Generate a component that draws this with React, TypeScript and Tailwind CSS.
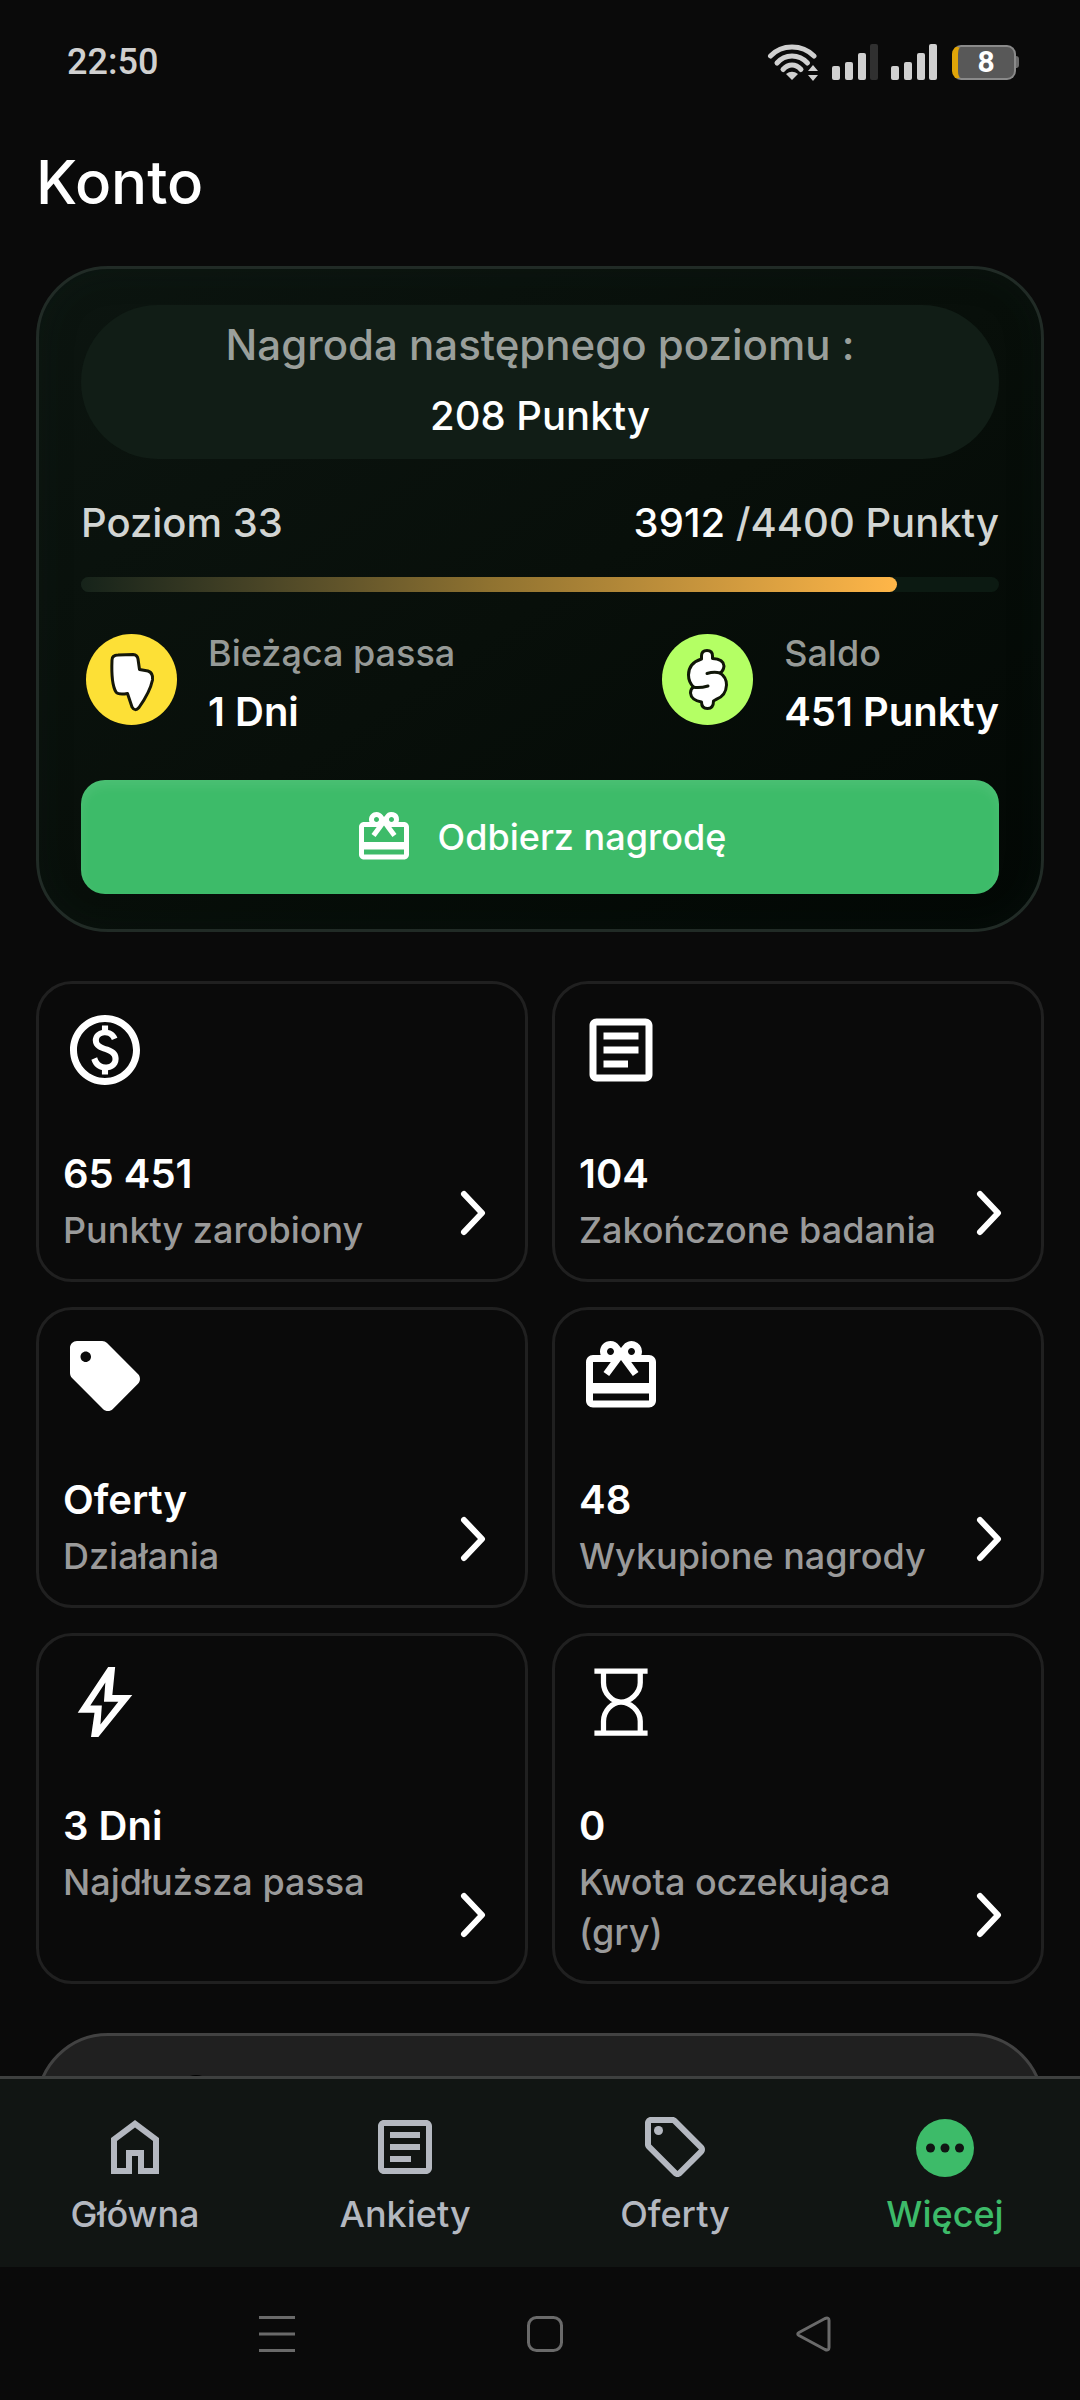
import type { ReactNode } from "react";
import { MdOutlineArticle, MdOutlinePaid, MdOutlineSell, MdRedeem, MdSell } from "react-icons/md";

function StatusBar() {
  return (
    <header className="flex h-[124px] shrink-0 items-center justify-between pr-[61px] pl-[67px] font-[Roboto,sans-serif] text-[#d0d0d0]">
      <time className="text-[36px] leading-[40px] font-medium">22:50</time>
      <div className="flex items-center gap-[13px]">
        <svg width="52" height="38" viewBox="0 0 52 38" fill="none" stroke="currentColor" strokeWidth="5" strokeLinecap="round" aria-label="Wi-Fi">
          <path d="M3.500 13Q12 4 25 4T47 13" />
          <path d="M10 20Q16 13 25 13T40.500 20" />
          <path d="M16 26.500Q20 22 25 22T34 26.500" />
          <path d="M25 37L19 31Q25 26.500 31 31Z" fill="currentColor" stroke="none" />
          <path d="M41 28L46 22L51 28ZM41 32L46 38L51 32Z" fill="currentColor" stroke="none" />
        </svg>
        <Signal weak />
        <Signal />
        <div className="flex items-center pl-[2px]">
          <div className="flex h-[35px] w-[64px] items-center justify-center rounded-[9px] border-2 border-[#8a8a8a] border-l-[6px] border-l-[#dfa408] bg-[#585858] text-[30px] leading-[32px] font-bold text-white">
            8
          </div>
          <div className="h-[12px] w-[3px] rounded-r-[3px] bg-[#6c6c6c]" />
        </div>
      </div>
    </header>
  );
}

function Signal({ weak = false }: { weak?: boolean }) {
  return (
    <svg width="46" height="38" viewBox="0 0 46 38" fill="currentColor" aria-label="Zasięg">
      <rect x="0" y="23" width="8" height="14" rx="2" />
      <rect x="13" y="19" width="8" height="18" rx="2" />
      <rect x="26" y="10" width="8" height="27" rx="2" />
      <rect x="38" y="1" width="8" height="36" rx="2" fill={weak ? "#303030" : "currentColor"} />
    </svg>
  );
}

function StreakBadge() {
  return (
    <svg className="size-[91px]" viewBox="0 0 91 91" aria-hidden="true">
      <circle cx="45.500" cy="45.500" r="45.500" fill="#fde036" />
      <path
        d="M26 26Q26 21 32 21L47 20.500Q51.500 21 52 25L53.500 35.500L62 37Q67.500 39 66.500 46Q64 58 53 73.500Q49 78 46 73L41.500 59.500Q32 61 30 58Q25 50 26 26Z"
        fill="#fff"
        stroke="#15170a"
        strokeWidth="3"
        strokeLinejoin="round"
      />
    </svg>
  );
}

function BalanceBadge() {
  return (
    <svg className="size-[91px]" viewBox="0 0 91 91" aria-hidden="true">
      <circle cx="45.500" cy="45.500" r="45.500" fill="#b4ff64" />
      <path
        d="M39.500 22Q39.500 16.500 45 16.500T50.500 22V24.500Q61.500 25 62 32Q61.500 37 58 39Q64.500 43 64.500 51Q64 62 54 65.500L51.500 67Q51.500 74.500 45.500 74.500T39.500 68Q29 66 28.500 59Q28.500 55 31.500 53Q26.500 48 26.500 41Q26.500 29 39.500 25Z"
        fill="#fff"
        stroke="#101608"
        strokeWidth="3"
        strokeLinejoin="round"
      />
      <path d="M58 39Q52 37.500 45 39.500M31 53Q37 54.500 46 52" fill="none" stroke="#101608" strokeWidth="3" strokeLinecap="round" />
    </svg>
  );
}

function BoltIcon() {
  return (
    <svg className="size-[84px]" viewBox="0 0 24 24" fill="currentColor" fillRule="evenodd" aria-hidden="true">
      <path d="M12.900 2H14.900L14.100 10H19.800L10.100 22H8L9 15.100H4.200ZM12.100 6.400L7.800 13H11.100L10.700 18.400L15.800 11.900H11.700Z" />
    </svg>
  );
}

function HourglassIcon() {
  return (
    <svg className="size-[84px]" viewBox="0 0 24 24" fill="none" stroke="currentColor" aria-hidden="true">
      <path d="M4.400 3.200H19.600M4.400 20.900H19.600" strokeWidth="1.500" />
      <path d="M7 3.500V6.500C7 9.500 9.500 12 12 12S17.500 9.500 17.500 6.500V3.500M7 20.500V17.500C7 14.500 9.500 12 12 12S17.500 14.500 17.500 17.500V20.500" strokeWidth="1.500" />
    </svg>
  );
}

function HomeIcon() {
  return (
    <svg className="size-[72px]" viewBox="0 0 24 24" fill="currentColor" aria-hidden="true">
      <path d="M6 19h3v-6h6v6h3v-9l-6-4.500L6 10v9zm-2 2V9l8-6 8 6v12h-7v-6h-2v6H4z" />
    </svg>
  );
}

function MoreIcon() {
  return (
    <svg className="size-[72px]" viewBox="0 0 72 72" aria-hidden="true">
      <circle cx="36" cy="37" r="29" fill="currentColor" />
      <g fill="#111513">
        <circle cx="21.500" cy="37" r="4.500" />
        <circle cx="36" cy="37" r="4.500" />
        <circle cx="50.500" cy="37" r="4.500" />
      </g>
    </svg>
  );
}

function LevelCard() {
  const points = 3912;
  const target = 4400;
  return (
    <section className="rounded-[72px] border-[3px] border-[#212b26] bg-linear-to-br from-[#0c1510] via-[#080f0a] to-[#030805] px-[42px] pt-[36px] pb-[35px] shadow-[inset_0_0_36px_rgba(16,36,28,0.2)]">
      <div className="rounded-full bg-[#111d16] pt-[4px] pb-[8px] text-center leading-[71px] font-medium">
        <p className="text-[42px] leading-[71px] text-[#9a9f9b]">Nagroda następnego poziomu :</p>
        <p className="text-[40px] leading-[71px]">208 Punkty</p>
      </div>
      <div className="mt-[34px] flex justify-between text-[40px] leading-[60px] font-medium text-[#d2d5d3]">
        <span>Poziom 33</span>
        <span>
          <span className="text-white">{points}</span> /{target} Punkty
        </span>
      </div>
      <div className="mt-[24px] h-[15px] rounded-full bg-[#0c1a12]" role="progressbar" aria-label="Poziom 33" aria-valuenow={points} aria-valuemax={target}>
        <div
          className="h-full rounded-full bg-linear-to-r from-[#16231a] via-[#8f7230] to-[#ffb648]"
          style={{ width: `${(points / target) * 100}%` }}
        />
      </div>
      <div className="mt-[27px] flex justify-between">
        <Metric icon={<StreakBadge />} label="Bieżąca passa" value="1 Dni" />
        <Metric icon={<BalanceBadge />} label="Saldo" value="451 Punkty" />
      </div>
      <button className="mt-[41px] flex h-[114px] w-full items-center justify-center gap-[24px] rounded-[24px] bg-[#3dbb69] text-[36px] font-medium text-white shadow-[inset_0_6px_12px_rgba(255,255,255,0.08)]">
        <MdRedeem className="size-[60px]" />
        Odbierz nagrodę
      </button>
    </section>
  );
}

function Metric({ icon, label, value }: { icon: ReactNode; label: string; value: string }) {
  return (
    <div className="flex items-center gap-[31px] pl-[5px]">
      {icon}
      <div className="pt-[2px]">
        <p className="text-[36px] leading-[64px] font-medium text-[#969a97]">{label}</p>
        <p className="text-[40px] leading-[54px] font-semibold">{value}</p>
      </div>
    </div>
  );
}

function StatCard({ icon, value, label }: { icon: ReactNode; value: string; label: string }) {
  return (
    <a href="#" className="flex flex-col rounded-[36px] border-[3px] border-[#202020] p-[24px]">
      {icon}
      <div className="mt-[53px] flex flex-1 justify-between gap-[10px]">
        <div>
          <p className="mb-[2px] text-[40px] leading-[58px] font-semibold">{value}</p>
          <p className="text-[36px] leading-[50px] font-medium text-[#9a9a9a]">{label}</p>
        </div>
        <svg className="h-[84px] w-[56px] shrink-0 self-end" viewBox="0 0 56 84" fill="none" stroke="currentColor" strokeWidth="6" strokeLinecap="round" strokeLinejoin="round" aria-hidden="true">
          <path d="M19 23L37 42L19 61" />
        </svg>
      </div>
    </a>
  );
}

function Tab({ icon, label, active = false }: { icon: ReactNode; label: string; active?: boolean }) {
  return (
    <a href="#" aria-current={active ? "page" : undefined} className={active ? "flex flex-col items-center text-[#3dbb69]" : "flex flex-col items-center text-[#b4b8c0]"}>
      {icon}
      <span className="text-[36px] leading-[62px] font-medium">{label}</span>
    </a>
  );
}

export default function App() {
  return (
    <div className="flex h-screen flex-col bg-[#0a0a0a] font-[Inter,sans-serif] text-white">
      <StatusBar />
      <main className="min-h-0 flex-1 overflow-y-auto px-[36px] [scrollbar-width:none]">
        <h1 className="pt-[22px] pb-[48px] text-[60px] leading-[72px] font-medium">Konto</h1>
        <LevelCard />
        <div className="mt-[49px] grid grid-cols-2 gap-x-[24px] gap-y-[25px]">
          <StatCard icon={<MdOutlinePaid className="size-[84px]" />} value="65 451" label="Punkty zarobiony" />
          <StatCard icon={<MdOutlineArticle className="size-[84px]" />} value="104" label="Zakończone badania" />
          <StatCard icon={<MdSell className="size-[84px]" />} value="Oferty" label="Działania" />
          <StatCard icon={<MdRedeem className="size-[84px]" />} value="48" label="Wykupione nagrody" />
          <StatCard icon={<BoltIcon />} value="3 Dni" label="Najdłuższa passa" />
          <StatCard icon={<HourglassIcon />} value="0" label="Kwota oczekująca (gry)" />
        </div>
        <section className="mt-[49px] h-[300px] rounded-[72px] border-[3px] border-[#424242] bg-[#202020] px-[139px] pt-[39px]">
          <div className="size-[36px] rounded-full border-[3px] border-black" />
        </section>
      </main>
      <nav className="grid h-[191px] shrink-0 grid-cols-4 border-t-[3px] border-[#3e403f] bg-[#111513] pt-[32px]">
        <Tab icon={<HomeIcon />} label="Główna" />
        <Tab icon={<MdOutlineArticle className="size-[72px]" />} label="Ankiety" />
        <Tab icon={<MdOutlineSell className="size-[72px]" />} label="Oferty" />
        <Tab icon={<MoreIcon />} label="Więcej" active />
      </nav>
      <footer className="flex h-[133px] shrink-0 items-center justify-between pr-[23%] pl-[24%] text-[#6a6a6a]">
        <button aria-label="Ostatnie aplikacje">
          <svg width="36" height="36" viewBox="0 0 36 36" stroke="currentColor" strokeWidth="3" fill="none">
            <path d="M0 1.500H36M0 18H36M0 34.500H36" />
          </svg>
        </button>
        <button aria-label="Ekran główny">
          <svg width="36" height="36" viewBox="0 0 36 36" stroke="currentColor" strokeWidth="3" fill="none">
            <rect x="1.500" y="1.500" width="33" height="33" rx="8" />
          </svg>
        </button>
        <button aria-label="Wstecz">
          <svg width="36" height="36" viewBox="0 0 36 36" stroke="currentColor" strokeWidth="3" fill="none" strokeLinejoin="round">
            <path d="M3 16.500L29 2.500Q33 1 33 4.500V31.500Q33 35 29 33.500L3 19.500Q0.500 18 3 16.500Z" />
          </svg>
        </button>
      </footer>
    </div>
  );
}
